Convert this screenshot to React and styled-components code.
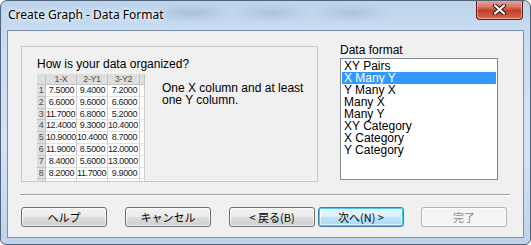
import React from "react";
import styled, { createGlobalStyle } from "styled-components";

const GlobalStyle = createGlobalStyle`
  html, body { margin: 0; padding: 0; background: #ffffff; }
  body { font-family: "Liberation Sans", Arial, sans-serif; }
`;

const Window = styled.div`
  width: 531px;
  height: 245px;
  box-sizing: border-box;
  display: flex;
  flex-direction: column;
  border: 1px solid #4f6379;
  border-radius: 7px 7px 6px 6px;
  overflow: hidden;
  background:
    radial-gradient(ellipse 40px 10px at 190px 12px, rgba(120, 150, 185, 0.35), transparent),
    radial-gradient(ellipse 40px 10px at 270px 12px, rgba(120, 150, 185, 0.3), transparent),
    radial-gradient(ellipse 40px 10px at 350px 12px, rgba(120, 150, 185, 0.3), transparent),
    linear-gradient(180deg, #bcd3ec 0%, #c8dcf1 12%, #d3e3f5 60%, #bed4ec 100%);
`;

const TitleBar = styled.div`
  height: 29px;
  display: flex;
  align-items: flex-start;
  flex-shrink: 0;
`;

const Title = styled.span`
  margin: 6px 0 0 7px;
  font-family: "Noto Sans", "Open Sans", sans-serif;
  font-size: 12px;
  line-height: 16px;
  color: #000;
  text-shadow: 0 0 6px #ffffff, 0 0 3px #ffffff;
`;

const CloseButton = styled.div`
  margin: -1px 7px 0 auto;
  width: 47px;
  height: 20px;
  box-sizing: border-box;
  display: flex;
  align-items: center;
  justify-content: center;
  border: 1px solid #5a1d16;
  border-top: none;
  border-radius: 0 0 4px 4px;
  background: linear-gradient(180deg, #e9a99b 0%, #d7786a 35%, #c0402c 55%, #cf5a40 85%, #e07b5c 100%);
  box-shadow: inset 0 0 0 1px rgba(255, 210, 200, 0.5);
`;

const Client = styled.div`
  margin: 0 6px;
  height: 208px;
  box-sizing: border-box;
  border: 1px solid #7f91a6;
  background: #f0f0f0;
  display: flex;
  flex-direction: column;
`;

const TopRow = styled.div`
  display: flex;
  align-items: flex-start;
  padding: 13px 0 0 13px;
  height: 138px;
  box-sizing: content-box;
`;

const Panel = styled.div`
  margin-top: 2px;
  width: 297px;
  height: 136px;
  box-sizing: border-box;
  border: 1px solid #c9c9c9;
  overflow: hidden;
  padding: 11px 0 0 15px;
`;

const Heading = styled.div`
  font-size: 12px;
  line-height: 12px;
  color: #000;
  white-space: nowrap;
`;

const PanelBody = styled.div`
  display: flex;
  align-items: flex-start;
  margin-top: 4px;
`;

const Sheet = styled.div`
  display: grid;
  grid-template-columns: 9px 31px 31px 32px 5px;
  grid-template-rows: 11px;
  grid-auto-rows: 11.8px;
  background: #ffffff;
  width: 108px;
  flex-shrink: 0;
`;

const Cell = styled.div`
  box-sizing: border-box;
  border-right: 1px solid ${(p) => (p.$head ? "#c4c4c4" : "#cfcfcf")};
  border-bottom: 1px solid ${(p) => (p.$head ? "#c4c4c4" : "#e2e2e2")};
  background: ${(p) => (p.$head ? "#dedede" : "#ffffff")};
  color: ${(p) => (p.$head ? "#505050" : "#202020")};
  font-size: 9px;
  line-height: 10px;
  letter-spacing: -0.4px;
  text-align: ${(p) => (p.$center ? "center" : "right")};
  padding-right: ${(p) => (p.$center ? "0" : "2px")};
  white-space: nowrap;
  overflow: hidden;
`;

const Description = styled.div`
  margin: 8px 0 0 17px;
  font-size: 12px;
  line-height: 12px;
  color: #000;
`;

const FormatColumn = styled.div`
  margin-left: 22px;
  display: flex;
  flex-direction: column;
`;

const Label = styled.div`
  font-size: 12px;
  line-height: 12px;
  color: #000;
`;

const ListBox = styled.div`
  margin-top: 2px;
  width: 158px;
  height: 122px;
  box-sizing: border-box;
  border: 1px solid #828790;
  background: #ffffff;
  padding-top: 1px;
`;

const ListItem = styled.div`
  margin: 0 1px;
  height: 12px;
  padding-left: 2px;
  font-size: 12px;
  line-height: 12px;
  background: ${(p) => (p.$selected ? "#3399ff" : "transparent")};
  color: ${(p) => (p.$selected ? "#ffffff" : "#000000")};
`;

const Separator = styled.div`
  margin: 12px 13px 0 12px;
  border-top: 1px solid #a0a0a0;
  border-bottom: 1px solid #ffffff;
`;

const ButtonRow = styled.div`
  display: flex;
  padding: 11px 0 0 13px;
`;

const Button = styled.div`
  margin-left: ${(p) => p.$gap || 0}px;
  width: 86px;
  height: 20px;
  box-sizing: border-box;
  display: flex;
  align-items: center;
  justify-content: center;
  border: 1px solid ${(p) => (p.$disabled ? "#adb2b5" : p.$default ? "#3c7fb1" : "#707070")};
  border-radius: 3px;
  background: ${(p) =>
    p.$disabled
      ? "#f4f4f4"
      : p.$default
      ? "linear-gradient(180deg, #eaf6fd 0%, #d9f0fc 50%, #bee6fd 51%, #a7d9f5 100%)"
      : "linear-gradient(180deg, #f2f2f2 0%, #ebebeb 50%, #dddddd 51%, #cfcfcf 100%)"};
  box-shadow: ${(p) =>
    p.$default ? "inset 0 0 0 1px #48c6f8, inset 0 0 0 2px rgba(255,255,255,0.6)" : "inset 0 0 0 1px rgba(255,255,255,0.7)"};
  font-family: "Noto Sans CJK JP", "Liberation Sans", sans-serif;
  font-size: 11px;
  line-height: 12px;
  color: ${(p) => (p.$disabled ? "#8b8b8b" : "#000000")};
  white-space: pre;
`;

const columns = ["1-X", "2-Y1", "3-Y2"];

const rows = [
  ["7.5000", "9.4000", "7.2000"],
  ["6.6000", "9.6000", "6.6000"],
  ["11.7000", "6.8000", "5.2000"],
  ["12.4000", "9.3000", "10.4000"],
  ["10.9000", "10.4000", "8.7000"],
  ["11.9000", "8.5000", "12.0000"],
  ["8.4000", "5.6000", "13.0000"],
  ["8.2000", "11.7000", "9.9000"],
  ["9.1000", "7.3000", "8.4000"],
];

const formats = [
  "XY Pairs",
  "X Many Y",
  "Y Many X",
  "Many X",
  "Many Y",
  "XY Category",
  "X Category",
  "Y Category",
];

const CloseGlyph = () => (
  <svg width="15" height="11" viewBox="0 0 15 11">
    <path d="M3 1.5 L12 9.5 M12 1.5 L3 9.5" stroke="#3a1410" strokeWidth="4.2" strokeLinecap="round" />
    <path d="M3 1.5 L12 9.5 M12 1.5 L3 9.5" stroke="#ffffff" strokeWidth="2.2" strokeLinecap="round" />
  </svg>
);

const DataSheet = () => (
  <Sheet>
    <Cell $head $center />
    {columns.map((c) => (
      <Cell key={c} $head $center>{c}</Cell>
    ))}
    <Cell $head $center />
    {rows.map((r, i) => (
      <React.Fragment key={i}>
        <Cell $head $center>{i + 1}</Cell>
        {r.map((v, j) => (
          <Cell key={j}>{v}</Cell>
        ))}
        <Cell />
      </React.Fragment>
    ))}
  </Sheet>
);

export default function App() {
  return (
    <>
      <GlobalStyle />
      <Window>
        <TitleBar>
          <Title>Create Graph - Data Format</Title>
          <CloseButton>
            <CloseGlyph />
          </CloseButton>
        </TitleBar>
        <Client>
          <TopRow>
            <Panel>
              <Heading>How is your data organized?</Heading>
              <PanelBody>
                <DataSheet />
                <Description>
                  One X column and at least
                  <br />
                  one Y column.
                </Description>
              </PanelBody>
            </Panel>
            <FormatColumn>
              <Label>Data format</Label>
              <ListBox>
                {formats.map((f, i) => (
                  <ListItem key={f} $selected={i === 1}>{f}</ListItem>
                ))}
              </ListBox>
            </FormatColumn>
          </TopRow>
          <Separator />
          <ButtonRow>
            <Button>ヘルプ</Button>
            <Button $gap={18}>キャンセル</Button>
            <Button $gap={18}>{"< 戻る(B)"}</Button>
            <Button $gap={3} $default>{"次へ(N) >"}</Button>
            <Button $gap={17} $disabled>完了</Button>
          </ButtonRow>
        </Client>
      </Window>
    </>
  );
}
